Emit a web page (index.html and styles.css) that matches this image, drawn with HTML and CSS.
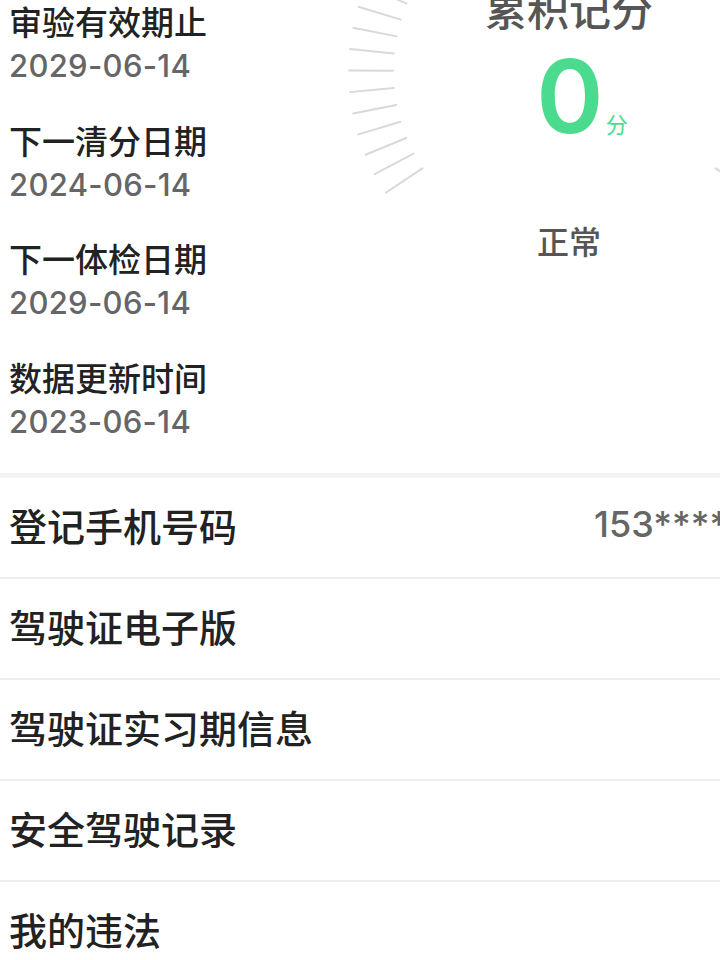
FILE: index.html
```html
<!DOCTYPE html>
<html lang="zh-CN">
<head>
    <meta charset="UTF-8">
    <meta name="viewport" content="width=device-width, initial-scale=1.0">
    <title>驾驶证信息</title>
    <link rel="stylesheet" href="styles.css">
</head>
<body>
    <div class="page">
        <section class="summary">
            <div class="dates">
                <div class="date-item">
                    <div class="date-label">审验有效期止</div>
                    <div class="date-value">2029-06-14</div>
                </div>
                <div class="date-item">
                    <div class="date-label">下一清分日期</div>
                    <div class="date-value">2024-06-14</div>
                </div>
                <div class="date-item">
                    <div class="date-label">下一体检日期</div>
                    <div class="date-value">2029-06-14</div>
                </div>
                <div class="date-item">
                    <div class="date-label">数据更新时间</div>
                    <div class="date-value">2023-06-14</div>
                </div>
            </div>

            <div class="score">
                <svg class="gauge" id="gauge" width="460" height="460" viewBox="0 0 460 460"></svg>
                <div class="score-title">累积记分</div>
                <div class="score-value">
                    <span class="score-num">0</span>
                    <span class="score-unit">分</span>
                </div>
                <div class="score-status">正常</div>
            </div>
        </section>

        <ul class="menu">
            <li class="menu-item">
                <span class="menu-label">登记手机号码</span>
                <span class="menu-extra">153****6618</span>
            </li>
            <li class="menu-item"><span class="menu-label">驾驶证电子版</span></li>
            <li class="menu-item"><span class="menu-label">驾驶证实习期信息</span></li>
            <li class="menu-item"><span class="menu-label">安全驾驶记录</span></li>
            <li class="menu-item"><span class="menu-label">我的违法</span></li>
        </ul>
    </div>

    <script>
        // tick marks of the score dial
        const gauge = document.getElementById("gauge");
        const tickCount = 45;
        const startAngle = 146.4;
        const sweep = 247.2;

        for (let i = 0; i < tickCount; i++) {
            const a = (startAngle + sweep * i / (tickCount - 1)) * Math.PI / 180;
            const line = document.createElementNS("http://www.w3.org/2000/svg", "line");
            line.setAttribute("x1", 230 + 176 * Math.cos(a));
            line.setAttribute("y1", 230 + 176 * Math.sin(a));
            line.setAttribute("x2", 230 + 220 * Math.cos(a));
            line.setAttribute("y2", 230 + 220 * Math.sin(a));
            line.setAttribute("class", "tick");
            gauge.appendChild(line);
        }
    </script>
</body>
</html>
```

FILE: styles.css
```css
html, body {
    overflow: hidden;
}

body {
    margin: 0;
    padding: 0;
    font-family: "Noto Sans CJK SC", sans-serif;
    background-color: #ffffff;
    color: #222222;
}

.page {
    width: 720px;
}

.summary {
    display: flex;
    padding: 0 0 27px 9px;
    border-bottom: 5px solid #f4f4f4;
}

.dates {
    flex: 1;
}

.date-item {
    margin-bottom: 28.5px;
}

.date-item:last-child {
    margin-bottom: 0;
}

.date-label {
    font-size: 33px;
    line-height: 42px;
    font-weight: 500;
    color: #222222;
}

.date-value {
    font-family: "Inter", "Noto Sans CJK SC", sans-serif;
    font-size: 31px;
    line-height: 48px;
    font-weight: 500;
    letter-spacing: 0.3px;
    color: #666666;
}

.score {
    position: relative;
    width: 302px;
    display: flex;
    flex-direction: column;
    align-items: center;
}

.gauge {
    position: absolute;
    left: -79px;
    top: -159px;
}

.tick {
    stroke: #d9d9d9;
    stroke-width: 2;
    stroke-linecap: round;
}

.score-title,
.score-value,
.score-status {
    position: relative;
}

.score-title {
    margin-top: -17px;
    font-size: 42px;
    line-height: 50px;
    font-weight: 500;
    color: #565656;
}

.score-value {
    display: flex;
    align-items: baseline;
    margin-top: 12px;
    padding-left: 26px;
    line-height: 1;
    color: #4bdb8f;
}

.score-num {
    font-family: "Inter", sans-serif;
    font-size: 102px;
    font-weight: 600;
}

.score-unit {
    margin-left: 2px;
    font-size: 22px;
}

.score-status {
    margin-top: 71px;
    font-size: 32px;
    line-height: 44px;
    font-weight: 500;
    color: #565656;
}

.menu {
    list-style: none;
    margin: 0;
    padding: 0;
}

.menu-item {
    display: grid;
    grid-template-columns: 585px auto;
    align-items: center;
    box-sizing: border-box;
    height: 101px;
    padding: 0 0 6px 9px;
    border-bottom: 2px solid #eeeeee;
    white-space: nowrap;
}

.menu-label {
    font-size: 38px;
    font-weight: 500;
    color: #222222;
}

.menu-extra {
    font-family: "Inter", sans-serif;
    font-size: 36px;
    font-weight: 500;
    color: #666666;
}
```
